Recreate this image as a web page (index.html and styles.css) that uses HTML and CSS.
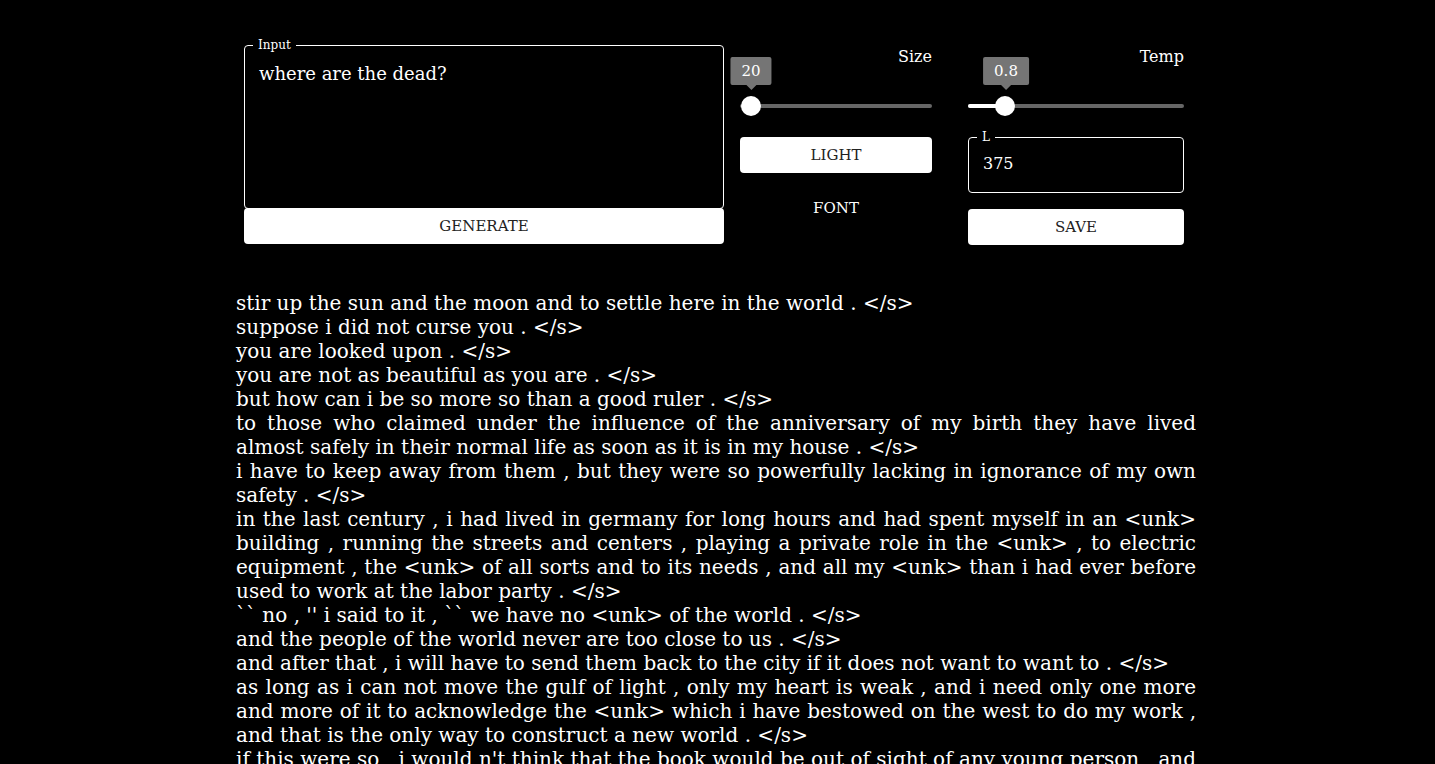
FILE: index.html
```html
<!DOCTYPE html>
<html>
<head>
<meta charset="utf-8">
<link rel="stylesheet" href="styles.css">
</head>
<body>
<div class="page">
  <div class="controls">
    <div class="col-input">
      <fieldset class="field field-input">
        <legend>Input</legend>
        <div class="field-value">where are the dead?</div>
      </fieldset>
      <button class="btn">GENERATE</button>
    </div>
    <div class="col-size">
      <div class="slider-label">Size</div>
      <div class="slider">
        <div class="track"></div>
        <div class="fill" style="width:0px"></div>
        <div class="thumb" style="left:11px"></div>
        <div class="tip" style="left:11px">20</div>
      </div>
      <button class="btn btn-light">LIGHT</button>
      <button class="btn-text">FONT</button>
    </div>
    <div class="col-temp">
      <div class="slider-label">Temp</div>
      <div class="slider">
        <div class="track"></div>
        <div class="fill" style="width:37px"></div>
        <div class="thumb" style="left:37px"></div>
        <div class="tip" style="left:38px">0.8</div>
      </div>
      <fieldset class="field field-l">
        <legend>L</legend>
        <div class="field-value small">375</div>
      </fieldset>
      <button class="btn btn-save">SAVE</button>
    </div>
  </div>
  <div class="output">
    <p>stir up the sun and the moon and to settle here in the world . &lt;/s&gt;</p>
    <p>suppose i did not curse you . &lt;/s&gt;</p>
    <p>you are looked upon . &lt;/s&gt;</p>
    <p>you are not as beautiful as you are . &lt;/s&gt;</p>
    <p>but how can i be so more so than a good ruler . &lt;/s&gt;</p>
    <p>to those who claimed under the influence of the anniversary of my birth they have lived almost safely in their normal life as soon as it is in my house . &lt;/s&gt;</p>
    <p>i have to keep away from them , but they were so powerfully lacking in ignorance of my own safety . &lt;/s&gt;</p>
    <p>in the last century , i had lived in germany for long hours and had spent myself in an &lt;unk&gt; building , running the streets and centers , playing a private role in the &lt;unk&gt; , to electric equipment , the &lt;unk&gt; of all sorts and to its needs , and all my &lt;unk&gt; than i had ever before used to work at the labor party . &lt;/s&gt;</p>
    <p>`` no , '' i said to it , `` we have no &lt;unk&gt; of the world . &lt;/s&gt;</p>
    <p>and the people of the world never are too close to us . &lt;/s&gt;</p>
    <p>and after that , i will have to send them back to the city if it does not want to want to . &lt;/s&gt;</p>
    <p>as long as i can not move the gulf of light , only my heart is weak , and i need only one more and more of it to acknowledge the &lt;unk&gt; which i have bestowed on the west to do my work , and that is the only way to construct a new world . &lt;/s&gt;</p>
    <p>if this were so , i would n't think that the book would be out of sight of any young person , and i would not have to look for it in the dark . &lt;/s&gt;</p>
  </div>
</div>
</body>
</html>
```
FILE: styles.css
```css
html, body {
  margin: 0;
  padding: 0;
  background: #000;
  color: #fff;
  font-family: "DejaVu Serif", serif;
}

.page {
  width: 960px;
  margin-left: 236px;
  padding-top: 38px;
}

.controls {
  display: flex;
  padding-left: 8px;
  align-items: flex-start;
}

.col-input {
  width: 480px;
  display: flex;
  flex-direction: column;
}

.col-size {
  width: 192px;
  margin-left: 16px;
  display: flex;
  flex-direction: column;
}

.col-temp {
  width: 216px;
  margin-left: 36px;
  display: flex;
  flex-direction: column;
}

.field {
  margin: 0;
  border: 1px solid #fff;
  border-radius: 4px;
  padding: 0 14px;
  min-width: 0;
}

.field legend {
  font-size: 12px;
  line-height: 14px;
  padding: 0 5px;
  margin-left: -6px;
  color: #fff;
}

.field-input {
  height: 171px;
  box-sizing: border-box;
}

.field-value {
  font-size: 18px;
  line-height: 22px;
  padding-top: 11px;
}

.field-value.small {
  font-size: 16px;
  line-height: 20px;
  padding-top: 10px;
}

.field-l {
  height: 63px;
  box-sizing: border-box;
  margin-top: 14px;
}

.btn {
  display: block;
  width: 100%;
  height: 36px;
  border: none;
  border-radius: 4px;
  background: #fff;
  color: #222;
  font-family: "DejaVu Serif", serif;
  font-size: 15px;
  padding: 0;
  cursor: pointer;
}

.col-input .btn {
  margin-top: -1px;
}

.slider-label {
  text-align: right;
  font-size: 16px;
  line-height: 20px;
  margin-top: 9px;
}

.slider {
  position: relative;
  height: 20px;
  margin-top: 29px;
}

.track {
  position: absolute;
  left: 0;
  right: 0;
  top: 8px;
  height: 4px;
  border-radius: 2px;
  background: #666;
}

.fill {
  position: absolute;
  left: 0;
  top: 8px;
  height: 4px;
  border-radius: 2px;
  background: #fff;
}

.thumb {
  position: absolute;
  top: 0;
  width: 20px;
  height: 20px;
  margin-left: -10px;
  border-radius: 50%;
  background: #fff;
}

.tip {
  position: absolute;
  bottom: 31px;
  transform: translateX(-50%);
  background: #757575;
  color: #fff;
  font-size: 15px;
  line-height: 28px;
  padding: 0 11px;
  border-radius: 2px;
  white-space: nowrap;
}

.tip::after {
  content: "";
  position: absolute;
  left: 50%;
  bottom: -5px;
  margin-left: -5px;
  border-left: 5px solid transparent;
  border-right: 5px solid transparent;
  border-top: 5px solid #757575;
}

.btn-light {
  margin-top: 21px;
}

.btn-text {
  display: block;
  background: none;
  border: none;
  color: #fff;
  font-family: "DejaVu Serif", serif;
  font-size: 15px;
  height: 36px;
  margin-top: 17px;
  padding: 0;
  text-align: center;
  width: 100%;
}

.btn-save {
  margin-top: 16px;
}

.output {
  margin-top: 46px;
  font-size: 20px;
  line-height: 24px;
}

.output p {
  margin: 0;
  text-align: justify;
}
```
